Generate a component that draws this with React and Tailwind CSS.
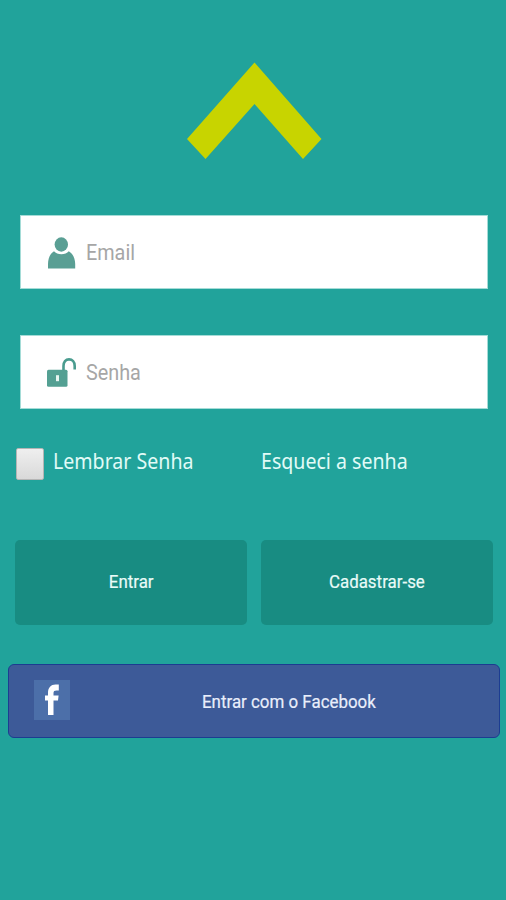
function Logo() {
  return (
    <svg className="h-[98px] w-[138px]" viewBox="0 0 138 98" fill="#c8d400">
      <path d="M69.5 .5 136.5 77 118 97 69.5 42 20.5 97 2 77Z" />
    </svg>
  )
}

function UserIcon() {
  return (
    <svg className="ml-px h-8 w-7" viewBox="0 0 28 32" fill="#5a9f94">
      <ellipse cx="13.3" cy="7.5" rx="6.7" ry="7.2" />
      <path d="M6 14.2C7.700 16.300 10.300 17.200 13.400 17.200s5.700-.9 7.400-3C24.700 16.500 27.200 21.500 27.200 27v4.500H0V27c0-5.500 2.200-10.500 6-12.800Z" />
    </svg>
  )
}

function LockIcon() {
  return (
    <svg className="h-[30px] w-[30px]" viewBox="0 0 30 30" fill="none">
      <path d="M16.5 12V8C16.5 4 18.7 1.4 22 1.4S27.7 4 27.7 8V11.5" stroke="#4a9c8f" strokeWidth="2.6" />
      <rect x="0" y="11.7" width="20.5" height="17" rx="1.5" fill="#54a093" />
      <path d="M9 17.2h3v6H9Z" fill="#e8f5f1" />
    </svg>
  )
}

function FacebookIcon() {
  return (
    <svg className="h-10 w-9" viewBox="0 0 36 40">
      <rect width="36" height="40" fill="#4c6fa9" />
      <path d="M14 35V20.5H11V15.5H14V13C14 7.5 17 4.5 21.5 4.5H24.8V10.5H22.5C20.3 10.5 19.5 11.3 19.5 13V15.5H24.6L24 20.5H19.5V35Z" fill="#fff" />
    </svg>
  )
}

function Field({ icon, label }) {
  return (
    <div className="flex h-[74px] items-center border border-[#a5dcd7] bg-white pl-[26px]">
      <div className="flex w-[39px] pt-px">{icon}</div>
      <span className="origin-left scale-x-[0.9] pt-[2px] text-[22px] leading-[26px] text-[#a6a6a6]">{label}</span>
    </div>
  )
}

function ActionButton({ children }) {
  return (
    <button type="button" className="flex h-[85px] flex-1 items-center justify-center rounded-[5px] bg-[#188c82] text-[19px] text-[#e9fbf8]">
      <span className="scale-x-[0.89] [-webkit-text-stroke:0.2px]">{children}</span>
    </button>
  )
}

export default function App() {
  return (
    <main className="h-[900px] w-[506px] overflow-hidden bg-[#21a39b] pt-[62px] font-['Roboto',sans-serif]">
      <div className="flex justify-center pl-[2px]">
        <Logo />
      </div>

      <div className="mt-[55px] flex flex-col gap-[46px] pr-[18px] pl-5">
        <Field icon={<UserIcon />} label="Email" />
        <Field icon={<LockIcon />} label="Senha" />
      </div>

      <div className="mt-[39px] flex h-8 pl-4 font-['Noto_Sans',sans-serif] text-[22px] leading-[24px] text-[#e2fbf7]">
        <span className="h-8 w-7 shrink-0 rounded-[2px] border border-[#b5b5b5] bg-linear-to-b from-[#efefef] to-[#d9d9d9]" />
        <span className="ml-[8.500px] w-[208px] origin-left scale-x-[0.89] whitespace-nowrap">Lembrar Senha</span>
        <span className="origin-left scale-x-[0.89] whitespace-nowrap">Esqueci a senha</span>
      </div>

      <div className="mt-[60px] flex gap-[14px] pr-[13px] pl-[15px]">
        <ActionButton>Entrar</ActionButton>
        <ActionButton>Cadastrar-se</ActionButton>
      </div>

      <div className="mt-[39px] pr-[6px] pl-2">
        <button type="button" className="flex h-[74px] w-full items-center rounded-[6px] border-[1.5px] border-[#1c3c91] bg-[#3d5a98] pl-[25px] text-[19px] text-[#e9eefb]">
          <span className="pb-[2px]">
            <FacebookIcon />
          </span>
          <span className="ml-[132px] origin-left scale-x-[0.89] pt-[2px] whitespace-nowrap [-webkit-text-stroke:0.2px]">Entrar com o Facebook</span>
        </button>
      </div>
    </main>
  )
}
